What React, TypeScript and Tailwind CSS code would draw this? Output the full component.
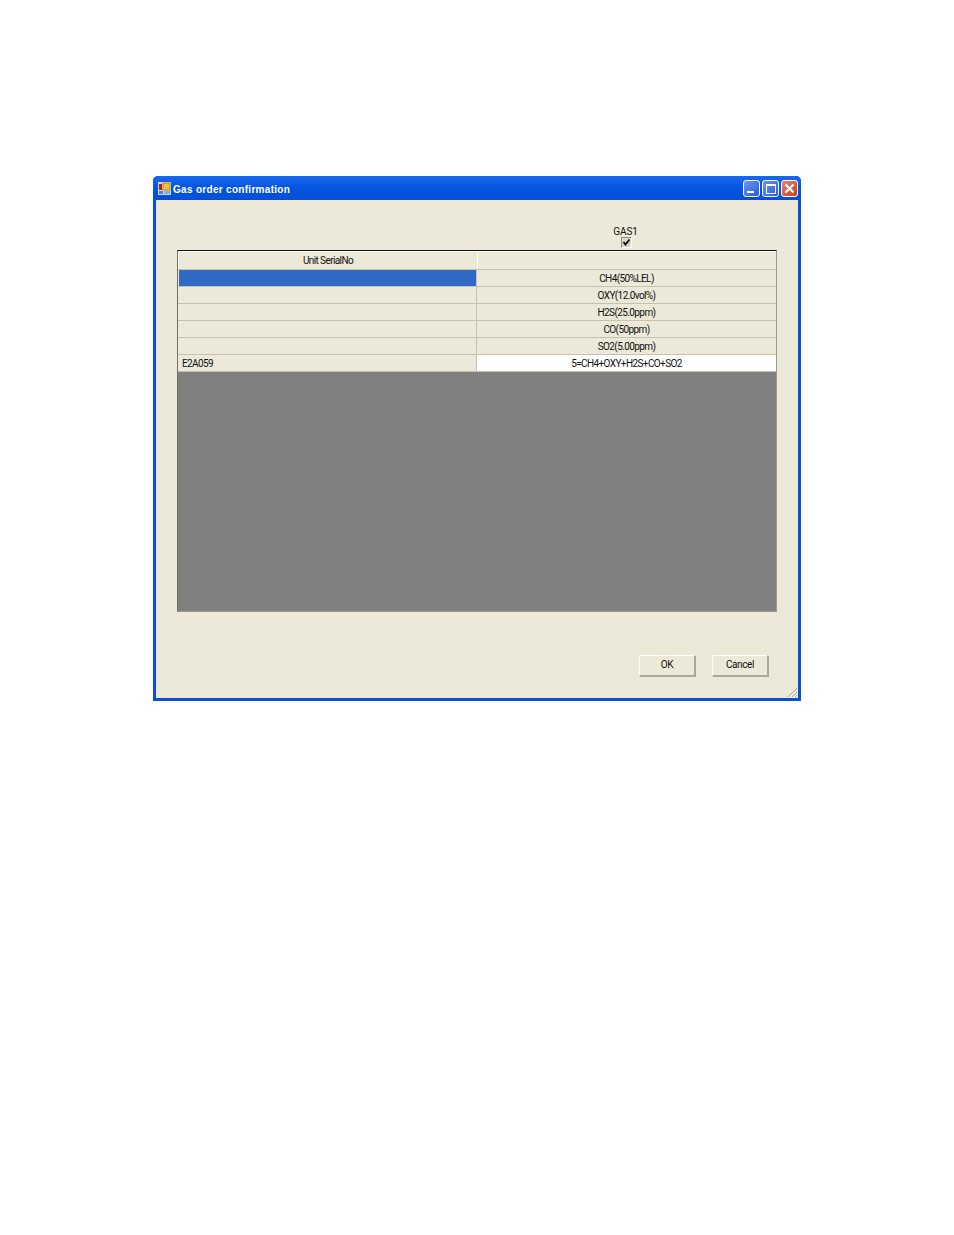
const rows = [
  { left: "", right: "CH4(50%LEL)", selected: true },
  { left: "", right: "OXY(12.0vol%)" },
  { left: "", right: "H2S(25.0ppm)" },
  { left: "", right: "CO(50ppm)" },
  { left: "", right: "SO2(5.00ppm)" },
  { left: "E2A059", right: "5=CH4+OXY+H2S+CO+SO2", white: true },
];

function AppIcon() {
  return (
    <svg width="13" height="13" viewBox="0 0 13 13" className="shrink-0">
      <rect x="0" y="0" width="13" height="13" fill="#c9d6ee" />
      <rect x="1" y="2" width="3" height="6" fill="#a8241a" />
      <rect x="5" y="1" width="7" height="7" fill="#f2c33a" stroke="#a97c10" strokeWidth="0.8" />
      <rect x="1" y="9" width="4" height="3" fill="#5a7fc4" />
      <rect x="6" y="9" width="6" height="3" fill="#8fa8d8" />
    </svg>
  );
}

function Button({ label }: { label: string }) {
  return (
    <div className="w-[56px] h-[21px] flex items-center justify-center bg-[#ece9d8] border border-t-white border-l-white border-r-[#aca899] border-b-[#aca899] shadow-[1px_1px_0_#aca899] text-[10px] tracking-[-0.4px] text-[#111]">
      <span className="-translate-y-[1px]">{label}</span>
    </div>
  );
}

export default function App() {
  return (
    <div className="font-['Roboto','Arial',sans-serif] w-[954px] h-[1235px] bg-white pt-[176px] pl-[153px]">
      <div className="relative w-[648px] h-[525px] flex flex-col rounded-t-[5px] bg-[#0a4fdc] px-[3px] pb-[3px] overflow-hidden">
        <div className="-mx-[3px] h-[24px] shrink-0 flex items-center pl-[5px] pr-[3px] pt-[1px] bg-gradient-to-b from-[#1a68ec] via-[#0454e0] to-[#0350d8]">
          <AppIcon />
          <span className="ml-[2px] pt-[1px] text-white font-['Liberation_Sans',sans-serif] font-bold text-[10px] tracking-[0.3px] whitespace-nowrap">
            Gas order confirmation
          </span>
          <div className="ml-auto flex gap-[2px]">
            <div className="w-[17px] h-[17px] rounded-[3px] border border-white bg-gradient-to-br from-[#6a96f0] to-[#2a5bd8] flex items-end pl-[3px] pb-[3px]">
              <div className="w-[7px] h-[2px] bg-white" />
            </div>
            <div className="w-[17px] h-[17px] rounded-[3px] border border-white bg-gradient-to-br from-[#6a96f0] to-[#2a5bd8] flex items-center justify-center">
              <div className="w-[10px] h-[10px] border border-white border-t-2" />
            </div>
            <div className="w-[17px] h-[17px] rounded-[3px] border border-white bg-gradient-to-br from-[#e8826a] to-[#c83a1a] flex items-center justify-center">
              <svg width="11" height="11" viewBox="0 0 11 11">
                <path d="M1.5 1.5 L9.5 9.5 M9.5 1.5 L1.5 9.5" stroke="white" strokeWidth="2.2" />
              </svg>
            </div>
          </div>
        </div>

        <div className="relative flex-1 bg-[#ece9d8] flex flex-col pl-[21px] pr-[21px]">
          <div className="h-[50px] shrink-0 flex">
            <div className="w-[299px]" />
            <div className="w-[299px] flex flex-col items-center pt-[27px]">
              <span className="text-[10px] leading-[9px] tracking-[-0.1px] text-[#111]">GAS1</span>
              <div className="mt-[1px] translate-x-[1px] w-[11px] h-[11px] bg-[#d8d6c8] border border-t-[#8f8d80] border-l-[#8f8d80] border-r-white border-b-white flex items-center justify-center">
                <svg width="9" height="9" viewBox="0 0 9 9">
                  <path d="M1.5 4 L3.5 6.5 L7.5 1.5" fill="none" stroke="#000" strokeWidth="1.8" />
                </svg>
              </div>
            </div>
          </div>

          <div className="w-[600px] h-[362px] shrink-0 bg-[#808080] border-t border-l border-t-[#111] border-l-[#716f64] border-r border-b border-r-[#9d9a8c] border-b-[#9d9a8c]">
            <div className="flex h-[19px] border-b border-[#c5c2b2] bg-[#ece9d8] text-[10px] tracking-[-0.6px] text-[#111]">
              <div className="w-[299px] flex items-center justify-center border-l border-t border-l-white border-t-white">
                Unit SerialNo
              </div>
              <div className="flex-1 border-l border-t border-white" />
            </div>
            {rows.map((r, i) => (
              <div key={i} className="flex h-[17px] border-b border-[#c5c2b2] text-[10px] tracking-[-0.6px] text-[#111]">
                <div className={`w-[299px] flex items-center pl-[3px] border-l border-l-[#ece9d8] border-r border-r-[#c5c2b2] ${r.selected ? "bg-[#316ac5]" : "bg-[#ece9d8]"}`}>
                  {r.left}
                </div>
                <div className={`flex-1 flex items-center justify-center ${r.white ? "bg-white" : "bg-[#ece9d8]"}`}>
                  {r.right}
                </div>
              </div>
            ))}
          </div>

          <div className="flex justify-end gap-[17px] pt-[43px] pr-[9px]">
            <Button label="OK" />
            <Button label="Cancel" />
          </div>

          <svg width="11" height="11" viewBox="0 0 11 11" className="absolute right-0 bottom-0">
            <path d="M10 1 L1 10 M10 5 L5 10 M10 8 L8 10" stroke="#aca899" strokeWidth="1" />
            <path d="M10 3 L3 10 M10 7 L7 10" stroke="#ffffff" strokeWidth="1" />
          </svg>
        </div>
      </div>
    </div>
  );
}
